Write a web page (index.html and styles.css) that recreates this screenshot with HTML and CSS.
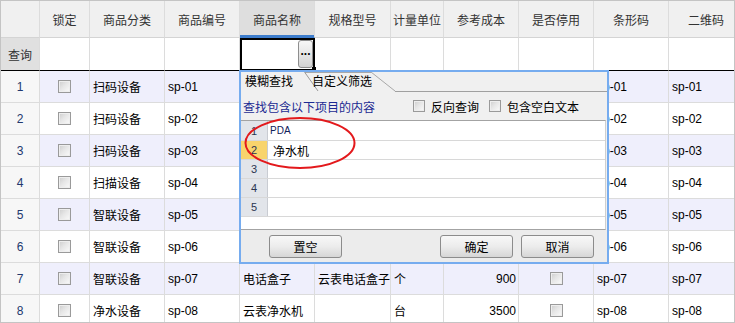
FILE: index.html
```html
<!DOCTYPE html>
<html lang="zh-CN">
<head>
<meta charset="utf-8">
<title>商品列表</title>
<link rel="stylesheet" href="styles.css">
</head>
<body>
<div class="frame">
  <div class="sheet">
    <div class="c hd"></div>
    <div class="c hd">锁定</div>
    <div class="c hd">商品分类</div>
    <div class="c hd">商品编号</div>
    <div class="c hd active">商品名称</div>
    <div class="c hd">规格型号</div>
    <div class="c hd">计量单位</div>
    <div class="c hd">参考成本</div>
    <div class="c hd">是否停用</div>
    <div class="c hd">条形码</div>
    <div class="c hd">二维码</div>

    <div class="c q rh qlabel">查询</div>
    <div class="c q"></div>
    <div class="c q"></div>
    <div class="c q"></div>
    <div class="c q qedit"><span class="dots">...</span></div>
    <div class="c q"></div>
    <div class="c q"></div>
    <div class="c q"></div>
    <div class="c q"></div>
    <div class="c q"></div>
    <div class="c q"></div>

    <div class="c rh">1</div>
    <div class="c odd mid"><span class="cb"></span></div>
    <div class="c odd">扫码设备</div>
    <div class="c odd">sp-01</div>
    <div class="c odd"></div>
    <div class="c odd"></div>
    <div class="c odd"></div>
    <div class="c odd"></div>
    <div class="c odd"></div>
    <div class="c odd">sp-01</div>
    <div class="c odd">sp-01</div>

    <div class="c rh">2</div>
    <div class="c mid"><span class="cb"></span></div>
    <div class="c">扫码设备</div>
    <div class="c">sp-02</div>
    <div class="c"></div>
    <div class="c"></div>
    <div class="c"></div>
    <div class="c"></div>
    <div class="c"></div>
    <div class="c">sp-02</div>
    <div class="c">sp-02</div>

    <div class="c rh">3</div>
    <div class="c odd mid"><span class="cb"></span></div>
    <div class="c odd">扫码设备</div>
    <div class="c odd">sp-03</div>
    <div class="c odd"></div>
    <div class="c odd"></div>
    <div class="c odd"></div>
    <div class="c odd"></div>
    <div class="c odd"></div>
    <div class="c odd">sp-03</div>
    <div class="c odd">sp-03</div>

    <div class="c rh">4</div>
    <div class="c mid"><span class="cb"></span></div>
    <div class="c">扫描设备</div>
    <div class="c">sp-04</div>
    <div class="c"></div>
    <div class="c"></div>
    <div class="c"></div>
    <div class="c"></div>
    <div class="c"></div>
    <div class="c">sp-04</div>
    <div class="c">sp-04</div>

    <div class="c rh">5</div>
    <div class="c odd mid"><span class="cb"></span></div>
    <div class="c odd">智联设备</div>
    <div class="c odd">sp-05</div>
    <div class="c odd"></div>
    <div class="c odd"></div>
    <div class="c odd"></div>
    <div class="c odd"></div>
    <div class="c odd"></div>
    <div class="c odd">sp-05</div>
    <div class="c odd">sp-05</div>

    <div class="c rh">6</div>
    <div class="c mid"><span class="cb"></span></div>
    <div class="c">智联设备</div>
    <div class="c">sp-06</div>
    <div class="c"></div>
    <div class="c"></div>
    <div class="c"></div>
    <div class="c"></div>
    <div class="c"></div>
    <div class="c">sp-06</div>
    <div class="c">sp-06</div>

    <div class="c rh">7</div>
    <div class="c odd mid"><span class="cb"></span></div>
    <div class="c odd">智联设备</div>
    <div class="c odd">sp-07</div>
    <div class="c odd">电话盒子</div>
    <div class="c odd">云表电话盒子</div>
    <div class="c odd">个</div>
    <div class="c odd num">900</div>
    <div class="c odd mid"><span class="cb"></span></div>
    <div class="c odd">sp-07</div>
    <div class="c odd">sp-07</div>

    <div class="c rh">8</div>
    <div class="c mid"><span class="cb"></span></div>
    <div class="c">净水设备</div>
    <div class="c">sp-08</div>
    <div class="c">云表净水机</div>
    <div class="c"></div>
    <div class="c">台</div>
    <div class="c num">3500</div>
    <div class="c mid"><span class="cb"></span></div>
    <div class="c">sp-08</div>
    <div class="c">sp-08</div>
  </div>

  <div class="handle"></div>

  <div class="popup">
    <div class="tabs">
      <svg class="tablines" width="366" height="20" viewBox="0 0 366 20">
        <line x1="64" y1="0.5" x2="130" y2="0.5" stroke="#a8a8a8" stroke-width="1"/>
        <line x1="63.5" y1="0" x2="77" y2="19" stroke="#9a9a9a" stroke-width="1"/>
        <line x1="130" y1="0" x2="154" y2="19" stroke="#a8a8a8" stroke-width="1"/>
        <line x1="154" y1="19.5" x2="366" y2="19.5" stroke="#a0a0a0" stroke-width="1"/>
      </svg>
      <span class="tab">模糊查找</span>
      <span class="tab tab2">自定义筛选</span>
    </div>
    <div class="info">
      <span class="info-text">查找包含以下项目的内容</span>
      <span class="cb small opt1"></span><span class="opt-label">反向查询</span>
      <span class="cb small opt2"></span><span class="opt-label">包含空白文本</span>
    </div>
    <div class="qgrid">
      <div class="qrow first"><span class="qn">1</span><span class="qv latin">PDA</span></div>
      <div class="qrow"><span class="qn cur">2</span><span class="qv cn">净水机</span></div>
      <div class="qrow"><span class="qn">3</span><span class="qv"></span></div>
      <div class="qrow"><span class="qn">4</span><span class="qv"></span></div>
      <div class="qrow"><span class="qn">5</span><span class="qv"></span></div>
      <div class="qfill"></div>
    </div>
    <div class="btns">
      <span class="btn">置空</span>
      <span class="btn-group"><span class="btn">确定</span><span class="btn">取消</span></span>
    </div>
    <svg class="mark" width="366" height="190" viewBox="0 0 366 190">
      <ellipse cx="59" cy="71" rx="54.5" ry="25" fill="none" stroke="#e3191c" stroke-width="2"/>
    </svg>
  </div>
</div>
</body>
</html>
```
FILE: styles.css
```css
html, body {
  margin: 0;
  padding: 0;
  background: #ffffff;
}

body {
  font-family: "Liberation Sans", "Noto Sans CJK SC", sans-serif;
  font-size: 12px;
  color: #000;
}

.frame {
  position: relative;
  width: 735px;
  height: 323px;
  box-sizing: border-box;
  border: 1px solid #c4c4c4;
  overflow: hidden;
  background: #fff;
}

.sheet {
  display: grid;
  grid-template-columns: 39px 50px 75px 75px 75px 76px 53px 75px 75px 75px 75px;
  grid-template-rows: 37px 33px repeat(8, 32px);
}

.c {
  box-sizing: border-box;
  border-right: 1px solid #dcdcdc;
  border-bottom: 1px solid #dcdcdc;
  display: flex;
  align-items: center;
  padding: 0 3px;
  white-space: nowrap;
  overflow: hidden;
}

.hd {
  background: #f0f0f0;
  color: #333;
  justify-content: center;
  border-bottom-color: #d4d4d4;
}

.hd.active {
  background: #dedede;
  border-bottom-color: #3c7ccc;
  box-shadow: inset 0 -2px 0 #3c7ccc;
}

.q {
  border-bottom-color: #000;
}

.qedit {
  justify-content: flex-end;
  align-items: flex-start;
  padding: 2px 1px 0 0;
  border-right-color: #000;
  box-shadow: inset 2px 2px 0 #000, inset -1px -1px 0 #000;
}

.dots {
  width: 15px;
  height: 28px;
  box-sizing: border-box;
  border: 1px solid #8e8e8e;
  border-radius: 3px;
  background: linear-gradient(#f7f7f7, #e6e6e6 50%, #d2d2d2);
  font-weight: bold;
  font-size: 12px;
  line-height: 20px;
  text-align: center;
  color: #000;
  letter-spacing: 0;
  overflow: hidden;
}

.rh {
  background: #f7f7f7;
  justify-content: center;
  color: #22386e;
  padding: 0;
}

.qlabel.rh {
  background: #e0e0e0;
  color: #333;
}

.odd {
  background: #efeffc;
}

.mid {
  justify-content: center;
}

.num {
  justify-content: flex-end;
  padding-right: 2px;
}

.cb {
  display: inline-block;
  width: 13px;
  height: 13px;
  box-sizing: border-box;
  border: 1px solid #9a9a9a;
  background: linear-gradient(135deg, #cdcdcd 0%, #e6e6e6 45%, #fbfbfb 100%);
  box-shadow: inset 0 0 0 1px #eeeeee;
  flex: none;
}

.handle {
  position: absolute;
  left: 311px;
  top: 66px;
  width: 4px;
  height: 4px;
  background: #000;
}

.popup {
  position: absolute;
  left: 238px;
  top: 69px;
  width: 370px;
  height: 194px;
  box-sizing: border-box;
  border: 2px solid #76acef;
  background: #f0f0f0;
  display: flex;
  flex-direction: column;
}

.tabs {
  position: relative;
  height: 20px;
  display: flex;
  align-items: center;
  flex: none;
}

.tablines {
  position: absolute;
  left: 0;
  top: 0;
}

.tab {
  position: relative;
  margin-left: 4px;
  color: #000;
  line-height: 16px;
}

.tab2 {
  margin-left: 19px;
}

.info {
  height: 28px;
  display: flex;
  align-items: center;
  padding-left: 2px;
  flex: none;
}

.info-text {
  color: #1b2a92;
}

.cb.small {
  width: 12px;
  height: 12px;
}

.opt1 {
  margin-left: 38px;
}

.opt2 {
  margin-left: 10px;
}

.opt-label {
  margin-left: 6px;
  color: #000;
}

.qgrid {
  width: 365px;
  box-sizing: border-box;
  background: #fff;
  border-top: 1px solid #a3a3a3;
  border-bottom: 1px solid #a3a3a3;
  border-right: 1px solid #cfcfcf;
  display: flex;
  flex-direction: column;
  flex: none;
}

.qrow {
  height: 19px;
  box-sizing: border-box;
  border-bottom: 1px solid #d8d8d8;
  display: flex;
}

.qrow.first {
  height: 20px;
}

.qn {
  width: 27px;
  box-sizing: border-box;
  border-right: 1px solid #c9ccd2;
  background: #e2e5ea;
  color: #2a3550;
  display: flex;
  align-items: center;
  justify-content: center;
  font-size: 11px;
}

.qn.cur {
  background: #f8d46c;
}

.qv {
  display: flex;
  align-items: center;
  padding-left: 2px;
}

.qv.latin {
  font-size: 10px;
  color: #10205a;
}

.qv.cn {
  padding-left: 5px;
}

.qfill {
  height: 12px;
}

.btns {
  flex: 1;
  display: flex;
  justify-content: space-between;
  align-items: flex-start;
  padding: 5px 13px 0 28px;
  background: #ececec;
}

.btn-group {
  display: flex;
  gap: 8px;
}

.btn {
  width: 73px;
  height: 23px;
  box-sizing: border-box;
  border: 1px solid #8c8c8c;
  border-radius: 3px;
  background: linear-gradient(#f8f8f8, #ececec 50%, #d6d6d6);
  display: flex;
  align-items: center;
  justify-content: center;
  color: #000;
}

.mark {
  position: absolute;
  left: 0;
  top: 0;
  pointer-events: none;
}
```
